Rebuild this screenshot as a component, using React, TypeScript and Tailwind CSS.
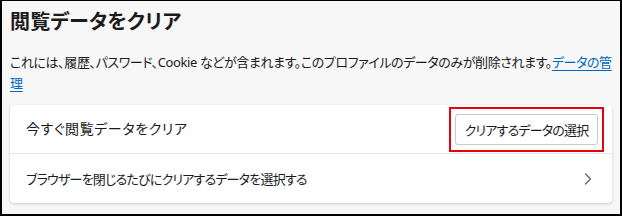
import React from 'react';

const font = "font-['Noto_Sans','Noto_Sans_CJK_JP',sans-serif] [font-feature-settings:'palt']";

const Chevron: React.FC = () => (
  <svg width="8" height="12" viewBox="0 0 8 12" fill="none" className="shrink-0">
    <path d="M1.5 1 L6.5 6 L1.5 11" stroke="#5f5f5f" strokeWidth="1.2" strokeLinecap="round" strokeLinejoin="round" />
  </svg>
);

export default function App() {
  return (
    <div
      className={`${font} w-[622px] h-[216px] bg-[#f7f7f7] border-black border-t border-l-2 border-r-2 border-b-2 px-[8px] pt-[7px] text-[#1b1b1b] flex flex-col`}
    >
      {/* Header */}
      <h1 className="text-[20px] leading-[28px] font-semibold tracking-[0.2px]">閲覧データをクリア</h1>

      <p className="mt-[16px] text-[13px] leading-[21px] tracking-[-0.4px]">
        これには、履歴、パスワード、Cookie などが含まれます。このプロファイルのデータのみが削除されます。
        <a href="#" className="text-[#0067c0] underline underline-offset-[3px]">
          データの管理
        </a>
      </p>

      {/* Card */}
      <div className="mt-[11px] bg-white rounded-[4px] shadow-[0_1px_3px_rgba(0,0,0,0.18)] flex flex-col">
        <div className="h-[48px] flex items-center justify-between pl-[16px] pr-[8px]">
          <span className="text-[14px] leading-[20px] tracking-[0.6px]">今すぐ閲覧データをクリア</span>
          <div className="border-2 border-[#e8000b] px-[4px] py-[5px] mt-[1px]">
            <button className="h-[31px] w-[143px] border border-[#c9c9c9] rounded-[3px] bg-white text-[13px] leading-[20px] text-[#1b1b1b] tracking-[-0.8px] whitespace-nowrap">
              クリアするデータの選択
            </button>
          </div>
        </div>
        <div className="h-px bg-[#e6e6e6]" />
        <div className="h-[49px] flex items-center justify-between pl-[16px] pr-[20px]">
          <span className="text-[13px] leading-[20px] tracking-[-0.8px]">ブラウザーを閉じるたびにクリアするデータを選択する</span>
          <Chevron />
        </div>
      </div>
    </div>
  );
}
